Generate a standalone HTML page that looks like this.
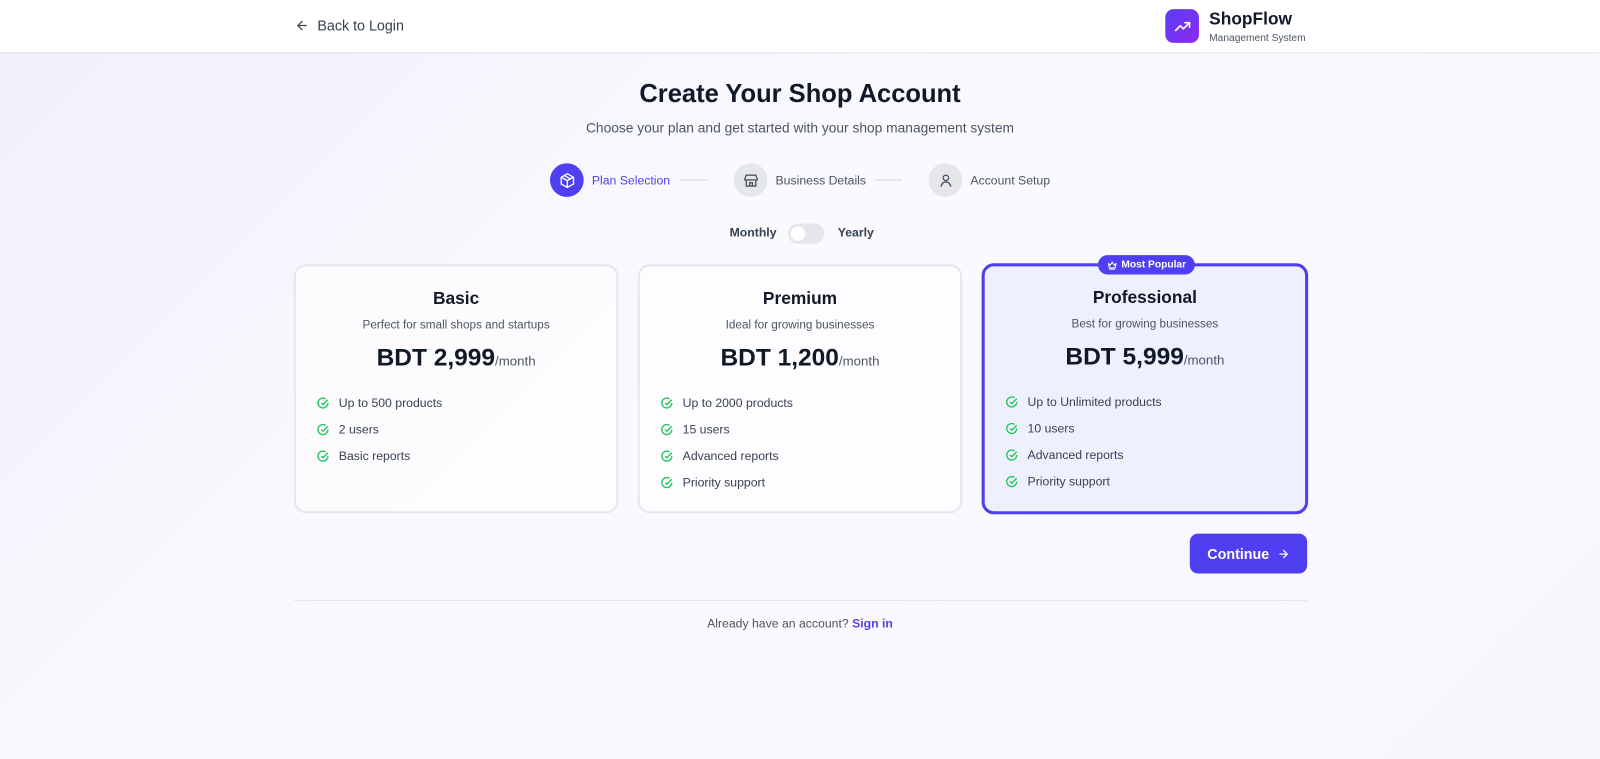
<!DOCTYPE html>
<html><head><meta charset="utf-8"><style>
*{box-sizing:border-box;margin:0;padding:0}
html,body{width:1600px;height:759px;overflow:hidden}
body{font-family:"Liberation Sans",sans-serif;background:linear-gradient(135deg,#f0f0fc 0%,#fafafe 45%,#f8f6fd 100%);color:#111827}
#w{position:absolute;left:0;top:0;width:1568px;height:744px;transform:scale(1.0204);transform-origin:0 0}
.hdr{position:absolute;left:0;top:0;width:1568px;height:51px;background:#fff;box-shadow:0 1px 3px rgba(0,0,0,.1)}
.back{position:absolute;left:289px;top:17px;font-size:14px;color:#374151;display:flex;align-items:center;gap:8px}
.logo{position:absolute;left:1142px;top:9px;width:33px;height:33px;border-radius:8px;background:linear-gradient(135deg,#5b3cf5,#8b2cf0);display:flex;align-items:center;justify-content:center}
.brand{position:absolute;left:1185px;top:9px;font-size:17px;font-weight:bold;color:#111827}
.sub{position:absolute;left:1185px;top:32px;font-size:10px;color:#4b5563}
h1{position:absolute;left:0;width:1568px;top:78px;text-align:center;font-size:25px;font-weight:bold}
.lead{position:absolute;left:0;width:1568px;top:118px;text-align:center;font-size:13.5px;color:#4b5563}
.step{position:absolute;top:160px;display:flex;align-items:center;gap:8px;font-size:12px;color:#4b5563}
.circ{width:33px;height:33px;border-radius:50%;background:#e5e7eb;display:flex;align-items:center;justify-content:center}
.line{position:absolute;top:176px;height:1px;width:26px;background:#d1d5db}
.tog{position:absolute;top:221px;font-size:12px;font-weight:bold;color:#374151}
.sw{position:absolute;left:772px;top:219px;width:36px;height:20px;border-radius:10px;background:#e5e7eb}
.sw i{position:absolute;left:3px;top:3px;width:14px;height:14px;border-radius:50%;background:#fff}
.card{position:absolute;top:259px;height:244px;width:318px;border:2px solid #e5e7eb;border-radius:12px;background:rgba(255,255,255,.6)}
.card.pro{border:3px solid #4f3ff0;background:#eef1fd;width:320px;height:246px;top:258px}
.card h3{text-align:center;font-size:17px;margin-top:22px}
.card .d{text-align:center;font-size:11.5px;color:#4b5563;margin-top:10px}
.card .p{text-align:center;font-size:24px;font-weight:bold;margin-top:12px}
.card .p span{font-size:13px;font-weight:normal;color:#4b5563}
.card ul{list-style:none;margin:17px 0 0 20px}
.card li{font-size:12px;color:#374151;height:26px;display:flex;align-items:center;gap:9px}
.pro h3{margin-top:21px}
.badge{position:absolute;left:111px;top:-11px;height:19px;padding:0 9px;border-radius:10px;background:#4f3ff0;color:#fff;font-size:10px;font-weight:bold;display:flex;align-items:center;gap:4px}
.btn{position:absolute;left:1166px;top:523px;width:115px;height:39px;border-radius:8px;background:#4f3ff0;color:#fff;font-size:14px;font-weight:bold;display:flex;align-items:center;justify-content:center;gap:8px}
.hr{position:absolute;left:288px;top:588px;width:993px;height:1px;background:#e5e7eb}
.foot{position:absolute;left:0;width:1568px;top:604px;text-align:center;font-size:12px;color:#4b5563}
.foot b{color:#4f3ff0}
</style></head><body><div id="w">
<div class="hdr">
<div class="back"><svg width="14" height="14" viewBox="0 0 24 24" fill="none" stroke="#374151" stroke-width="2" stroke-linecap="round"><path d="M19 12H5M12 19l-7-7 7-7"/></svg>Back to Login</div>
<div class="logo"><svg width="18" height="18" viewBox="0 0 24 24" fill="none" stroke="#fff" stroke-width="2.2" stroke-linecap="round" stroke-linejoin="round"><path d="M3 17l6-6 4 4 8-8M15 7h6v6"/></svg></div>
<div class="brand">ShopFlow</div><div class="sub">Management System</div>
</div>
<h1>Create Your Shop Account</h1>
<div class="lead">Choose your plan and get started with your shop management system</div>
<div class="step" style="left:539px;color:#4f3ff0"><div class="circ" style="background:#4f3ff0"><svg width="16" height="16" viewBox="0 0 24 24" fill="none" stroke="#fff" stroke-width="2" stroke-linejoin="round"><path d="M12 2l9 5v10l-9 5-9-5V7z M3 7l9 5 9-5 M12 12v10 M7.5 4.5l9 5"/></svg></div>Plan Selection</div>
<div class="line" style="left:667px"></div>
<div class="step" style="left:719px"><div class="circ"><svg width="16" height="16" viewBox="0 0 24 24" fill="none" stroke="#4b5563" stroke-width="2"><path d="M3 9l2-5h14l2 5v2H3zM5 11v9h14v-9M10 20v-5h4v5"/></svg></div>Business Details</div>
<div class="line" style="left:858px"></div>
<div class="step" style="left:910px"><div class="circ"><svg width="16" height="16" viewBox="0 0 24 24" fill="none" stroke="#4b5563" stroke-width="2"><circle cx="12" cy="8" r="4"/><path d="M5 21a7 7 0 0114 0"/></svg></div>Account Setup</div>
<div class="tog" style="left:715px">Monthly</div><div class="sw"><i></i></div><div class="tog" style="left:821px">Yearly</div>
<div class="card" style="left:288px"><h3>Basic</h3><div class="d">Perfect for small shops and startups</div><div class="p">BDT 2,999<span>/month</span></div><ul>
<li><svg width="13" height="13" viewBox="0 0 24 24" fill="none" stroke="#22c55e" stroke-width="2.5"><path d="M21 11a9 9 0 11-4-7.5M9 11l3 3 9-9"/></svg>Up to 500 products</li>
<li><svg width="13" height="13" viewBox="0 0 24 24" fill="none" stroke="#22c55e" stroke-width="2.5"><path d="M21 11a9 9 0 11-4-7.5M9 11l3 3 9-9"/></svg>2 users</li>
<li><svg width="13" height="13" viewBox="0 0 24 24" fill="none" stroke="#22c55e" stroke-width="2.5"><path d="M21 11a9 9 0 11-4-7.5M9 11l3 3 9-9"/></svg>Basic reports</li></ul></div>
<div class="card" style="left:625px"><h3>Premium</h3><div class="d">Ideal for growing businesses</div><div class="p">BDT 1,200<span>/month</span></div><ul>
<li><svg width="13" height="13" viewBox="0 0 24 24" fill="none" stroke="#22c55e" stroke-width="2.5"><path d="M21 11a9 9 0 11-4-7.5M9 11l3 3 9-9"/></svg>Up to 2000 products</li>
<li><svg width="13" height="13" viewBox="0 0 24 24" fill="none" stroke="#22c55e" stroke-width="2.5"><path d="M21 11a9 9 0 11-4-7.5M9 11l3 3 9-9"/></svg>15 users</li>
<li><svg width="13" height="13" viewBox="0 0 24 24" fill="none" stroke="#22c55e" stroke-width="2.5"><path d="M21 11a9 9 0 11-4-7.5M9 11l3 3 9-9"/></svg>Advanced reports</li>
<li><svg width="13" height="13" viewBox="0 0 24 24" fill="none" stroke="#22c55e" stroke-width="2.5"><path d="M21 11a9 9 0 11-4-7.5M9 11l3 3 9-9"/></svg>Priority support</li></ul></div>
<div class="card pro" style="left:962px"><div class="badge"><svg width="10" height="10" viewBox="0 0 24 24" fill="none" stroke="#fff" stroke-width="2.5"><path d="M3 7l4 5 5-7 5 7 4-5-2 11H5zM5 21h14"/></svg>Most Popular</div><h3>Professional</h3><div class="d">Best for growing businesses</div><div class="p">BDT 5,999<span>/month</span></div><ul>
<li><svg width="13" height="13" viewBox="0 0 24 24" fill="none" stroke="#22c55e" stroke-width="2.5"><path d="M21 11a9 9 0 11-4-7.5M9 11l3 3 9-9"/></svg>Up to Unlimited products</li>
<li><svg width="13" height="13" viewBox="0 0 24 24" fill="none" stroke="#22c55e" stroke-width="2.5"><path d="M21 11a9 9 0 11-4-7.5M9 11l3 3 9-9"/></svg>10 users</li>
<li><svg width="13" height="13" viewBox="0 0 24 24" fill="none" stroke="#22c55e" stroke-width="2.5"><path d="M21 11a9 9 0 11-4-7.5M9 11l3 3 9-9"/></svg>Advanced reports</li>
<li><svg width="13" height="13" viewBox="0 0 24 24" fill="none" stroke="#22c55e" stroke-width="2.5"><path d="M21 11a9 9 0 11-4-7.5M9 11l3 3 9-9"/></svg>Priority support</li></ul></div>
<div class="btn">Continue <svg width="12" height="12" viewBox="0 0 24 24" fill="none" stroke="#fff" stroke-width="2.5" stroke-linecap="round"><path d="M5 12h14M12 5l7 7-7 7"/></svg></div>
<div class="hr"></div>
<div class="foot">Already have an account? <b>Sign in</b></div>
</div></body></html>
